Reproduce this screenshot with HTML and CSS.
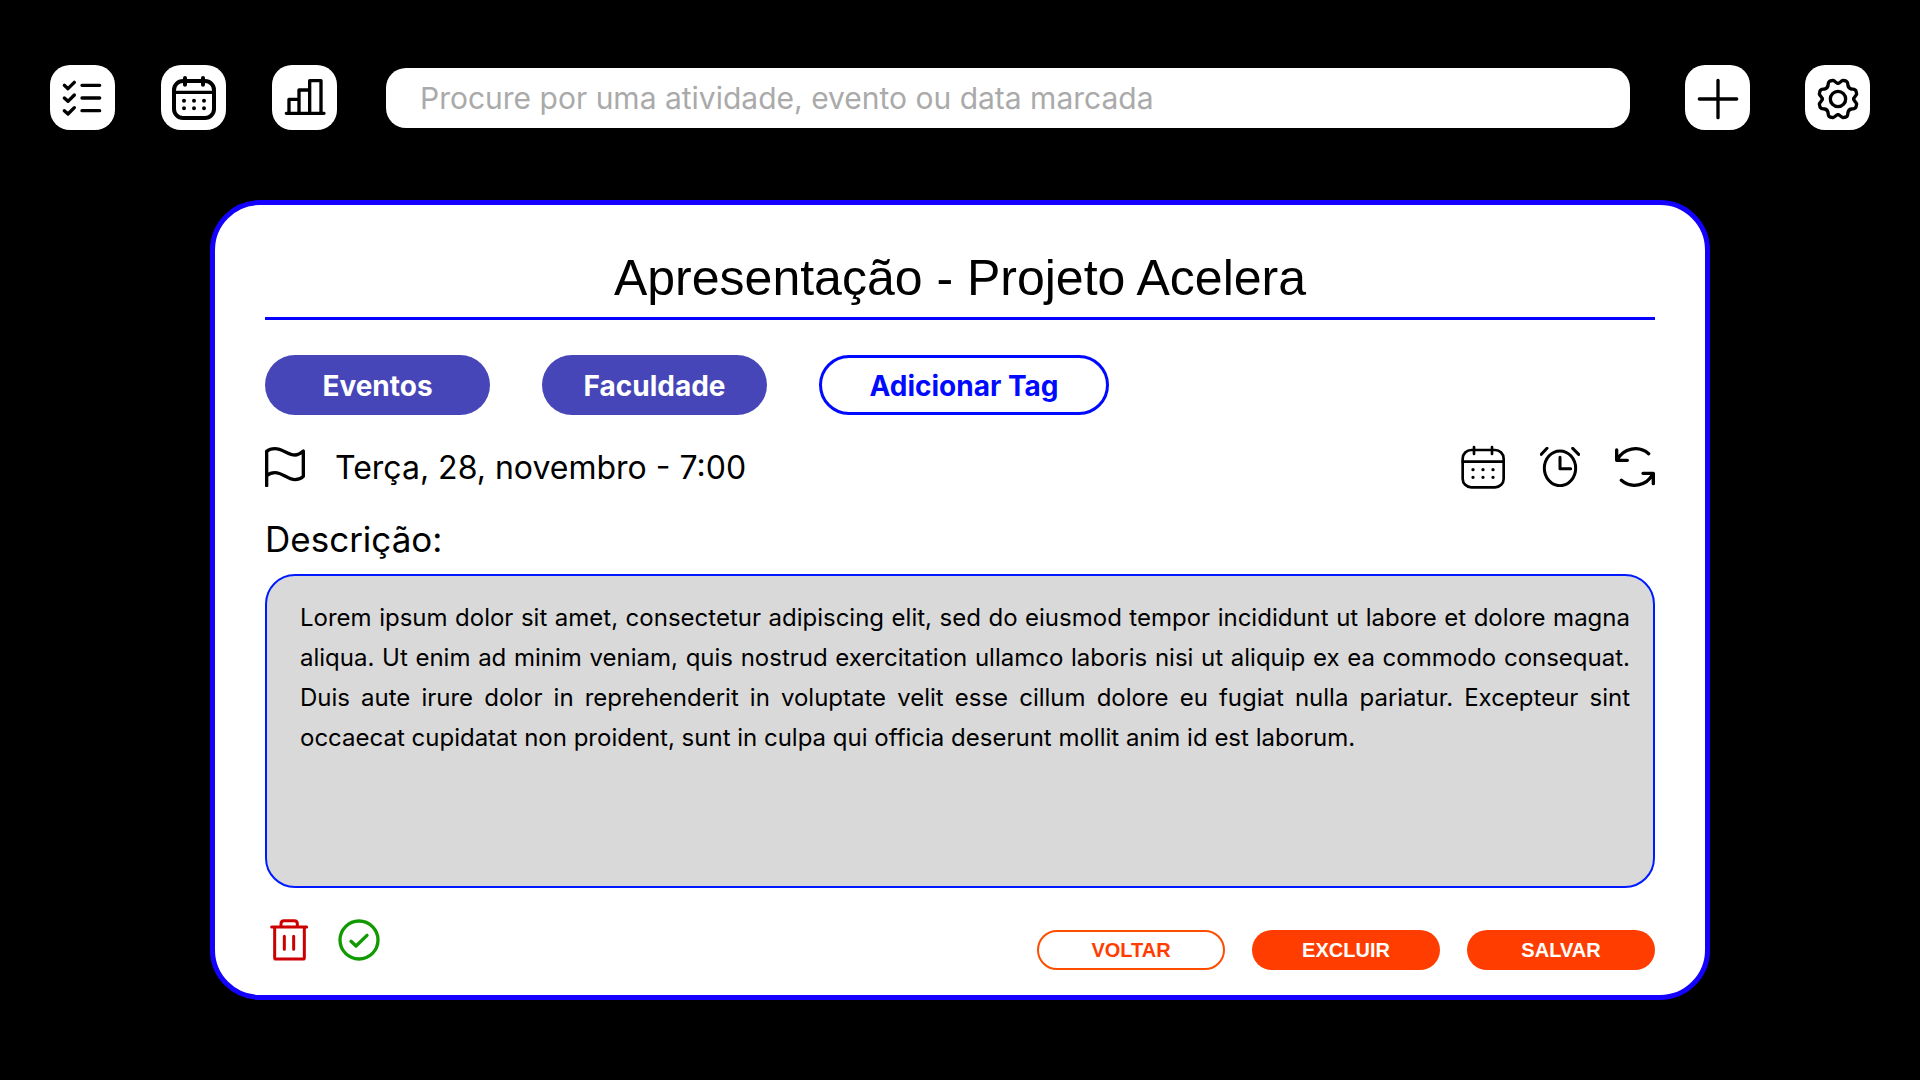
FILE: index.html
```html
<!DOCTYPE html>
<html lang="pt-BR">
<head>
<meta charset="utf-8">
<meta name="viewport" content="width=device-width, initial-scale=1">
<title>Apresentação - Projeto Acelera</title>
<link rel="stylesheet" href="styles.css">
</head>
<body>
<header class="topbar">
  <nav class="topbar-nav">
    <button class="tile" type="button" aria-label="Atividades">
      <svg class="tile-icon" viewBox="0 0 195 195" stroke-width="10">
        <path d="M43 61l11 10 19-19M43 99l11 10 19-19M43 137l11 10 19-19M96 61h53M96 99h53M96 137h53"/>
      </svg>
    </button>
    <button class="tile" type="button" aria-label="Calendário">
      <svg class="tile-icon" viewBox="0 0 195 195" stroke-width="12">
        <rect x="39" y="48" width="120" height="111" rx="27"/>
        <path d="M72 39v20M126 39v20"/>
        <path d="M39 82h120" stroke-width="10"/>
        <path d="M69 107h0M99 107h0M129 107h0M69 130h0M99 130h0M129 130h0"/>
      </svg>
    </button>
    <button class="tile" type="button" aria-label="Estatísticas">
      <svg class="tile-icon" viewBox="0 0 195 195" stroke-width="10">
        <path d="M43 145h113M51 145v-42h30M81 145V75h32M113 145V47h34v98"/>
      </svg>
    </button>
  </nav>
  <input class="search" type="search" aria-label="Procurar" placeholder="Procure por uma atividade, evento ou data marcada">
  <div class="topbar-actions">
    <button class="tile" type="button" aria-label="Adicionar">
      <svg class="tile-icon" viewBox="0 0 195 195" stroke-width="10">
        <path d="M99 46v112M43 102h112"/>
      </svg>
    </button>
    <button class="tile" type="button" aria-label="Configurações">
      <svg class="tile-icon" viewBox="0 0 195 195" stroke-width="10">
        <circle cx="99" cy="102" r="23"/>
        <g transform="translate(99 102)">
          <path id="gear-quarter" d="M0-47C6-47 9-55 15-56L24-54C30-52 29-46 30-40C31-35 35-31 40-30C46-29 52-30 54-24L56-15C55-9 47-6 47 0"/>
          <use href="#gear-quarter" transform="rotate(90)"/>
          <use href="#gear-quarter" transform="rotate(180)"/>
          <use href="#gear-quarter" transform="rotate(270)"/>
        </g>
      </svg>
    </button>
  </div>
</header>

<main class="card">
  <h1 class="title">Apresentação - Projeto Acelera</h1>

  <div class="tags">
    <button class="tag" type="button">Eventos</button>
    <button class="tag" type="button">Faculdade</button>
    <button class="tag tag-add" type="button">Adicionar Tag</button>
  </div>

  <div class="schedule">
    <svg class="icon" viewBox="0 0 120 120" stroke-width="10" aria-hidden="true">
      <path d="M5 116V13C12 7 20 5 30 5C52 5 70 24 90 24C100 24 108 18 115 12V88C108 95 100 98 90 98C70 98 52 77 30 77C20 77 12 80 5 86"/>
    </svg>
    <time class="date" datetime="11-28T07:00">Terça, 28, novembro - 7:00</time>
    <div class="schedule-actions">
      <button class="icon-button" type="button" aria-label="Alterar data">
        <svg class="icon icon-large" viewBox="0 0 132 132" stroke-width="8">
          <rect x="5" y="15" width="123" height="112" rx="26"/>
          <path d="M39 6v21M93 6v21M5 50h123"/>
          <path d="M36 74h0M66 74h0M96 74h0M36 97h0M66 97h0M96 97h0" stroke-width="10"/>
        </svg>
      </button>
      <button class="icon-button" type="button" aria-label="Lembrete">
        <svg class="icon" viewBox="0 0 120 120" stroke-width="9">
          <ellipse cx="60" cy="64" rx="47" ry="52"/>
          <path d="M60 31v34h32M4 22L21 4M98 4l18 18"/>
        </svg>
      </button>
      <button class="icon-button" type="button" aria-label="Repetir">
        <svg class="icon" viewBox="0 0 120 120" stroke-width="10">
          <path d="M5 9v31h32M7 38A61 61 0 0 1 101 20M115 110V79H84M113 82A61 61 0 0 1 19 100"/>
        </svg>
      </button>
    </div>
  </div>

  <label class="label" for="description">Descrição:</label>
  <textarea class="description" id="description" spellcheck="false">Lorem ipsum dolor sit amet, consectetur adipiscing elit, sed do eiusmod tempor incididunt ut labore et dolore magna aliqua. Ut enim ad minim veniam, quis nostrud exercitation ullamco laboris nisi ut aliquip ex ea commodo consequat. Duis aute irure dolor in reprehenderit in voluptate velit esse cillum dolore eu fugiat nulla pariatur. Excepteur sint occaecat cupidatat non proident, sunt in culpa qui officia deserunt mollit anim id est laborum.</textarea>

  <footer class="card-footer">
    <div class="state-actions">
      <button class="icon-button danger" type="button" aria-label="Apagar">
        <svg class="icon icon-medium" viewBox="-3 0 126 126" stroke-width="9">
          <path d="M8 24h105M17 24v92q0 4 4 4h81q4 0 4-4V24M36 24V14q0-9 9-9h31q9 0 9 9v10"/>
          <path d="M46 52v39M74 52v39"/>
        </svg>
      </button>
      <button class="icon-button success" type="button" aria-label="Concluir">
        <svg class="icon icon-medium" viewBox="0 0 126 126" stroke-width="10">
          <circle cx="63" cy="63" r="57"/>
          <path d="M39 67l15 14 33-32"/>
        </svg>
      </button>
    </div>
    <div class="form-actions">
      <button class="action action-outline" type="button">VOLTAR</button>
      <button class="action" type="button">EXCLUIR</button>
      <button class="action" type="submit">SALVAR</button>
    </div>
  </footer>
</main>
</body>
</html>
```
FILE: styles.css
```css
* {
  box-sizing: border-box;
}

body {
  margin: 0;
  background: #000;
  color: #000;
  font-family: Inter, sans-serif;
}

button {
  margin: 0;
  padding: 0;
  border: 0;
  color: inherit;
  font: inherit;
  cursor: pointer;
}

svg {
  display: block;
  fill: none;
  stroke: currentColor;
  stroke-linecap: round;
  stroke-linejoin: round;
}

.topbar {
  display: flex;
  align-items: center;
  padding: 65px 50px 70px;
}

.topbar-nav {
  display: flex;
  gap: 46px;
}

.topbar-actions {
  display: flex;
  gap: 55px;
}

.tile {
  width: 65px;
  height: 65px;
  border-radius: 20px;
  background: #fff;
}

.tile-icon {
  width: 65px;
  height: 65px;
}

.search {
  flex: 1;
  min-width: 0;
  height: 60px;
  margin: 0 55px 0 49px;
  padding: 0 34px;
  border: 0;
  border-radius: 20px;
  background: #fff;
  font: 400 30px Inter, sans-serif;
}

.search::placeholder {
  color: #aaa;
}

.card {
  display: flex;
  flex-direction: column;
  max-width: 1500px;
  margin: 0 auto 80px;
  padding: 43px 50px 25px;
  border: 5px solid #1400ff;
  border-radius: 50px;
  background: #fff;
}

.title {
  margin: 0 0 35px;
  padding-bottom: 9px;
  border-bottom: 3px solid #0500ff;
  font: 400 50px/60px "Liberation Sans", Arial, sans-serif;
  text-align: center;
}

.tags {
  display: flex;
  gap: 52px;
  margin-bottom: 30px;
}

.tag {
  min-width: 225px;
  height: 60px;
  padding-top: 2px;
  border-radius: 30px;
  background: #4746b8;
  color: #fff;
  font-size: 28px;
  font-weight: 700;
}

.tag-add {
  min-width: 290px;
  border: 3px solid #000aff;
  background: #fff;
  color: #000aff;
}

.schedule {
  display: flex;
  align-items: center;
  height: 44px;
  margin-bottom: 30px;
}

.icon {
  width: 40px;
  height: 40px;
}

.icon-medium {
  width: 42px;
  height: 42px;
}

.icon-large {
  width: 44px;
  height: 44px;
}

.icon-button {
  background: none;
}

.date {
  margin-left: 30px;
  font-size: 32px;
}

.schedule-actions {
  display: flex;
  align-items: center;
  gap: 35px;
  margin-left: auto;
}

.label {
  margin-bottom: 15px;
  font-size: 35px;
  line-height: 40px;
}

.description {
  display: block;
  width: 100%;
  height: 314px;
  margin: 0 0 31px;
  padding: 22px 23px 22px 33px;
  border: 2px solid #001aff;
  border-radius: 30px;
  background: #d9d9d9;
  color: #000;
  font: 400 24px/40px Inter, sans-serif;
  text-align: justify;
  resize: none;
}

.card-footer {
  display: flex;
  justify-content: space-between;
  height: 51px;
}

.state-actions {
  display: flex;
  align-items: flex-start;
  gap: 28px;
  padding-left: 3px;
}

.danger {
  color: #c00;
}

.success {
  color: #109a00;
}

.form-actions {
  display: flex;
  align-items: flex-end;
  gap: 27px;
}

.action {
  width: 188px;
  height: 40px;
  border-radius: 20px;
  background: #ff3d00;
  color: #fff;
  font: 700 20px "Liberation Sans", Arial, sans-serif;
}

.action-outline {
  border: 2px solid #ff4d00;
  background: #fff;
  color: #ff3d00;
}
```
